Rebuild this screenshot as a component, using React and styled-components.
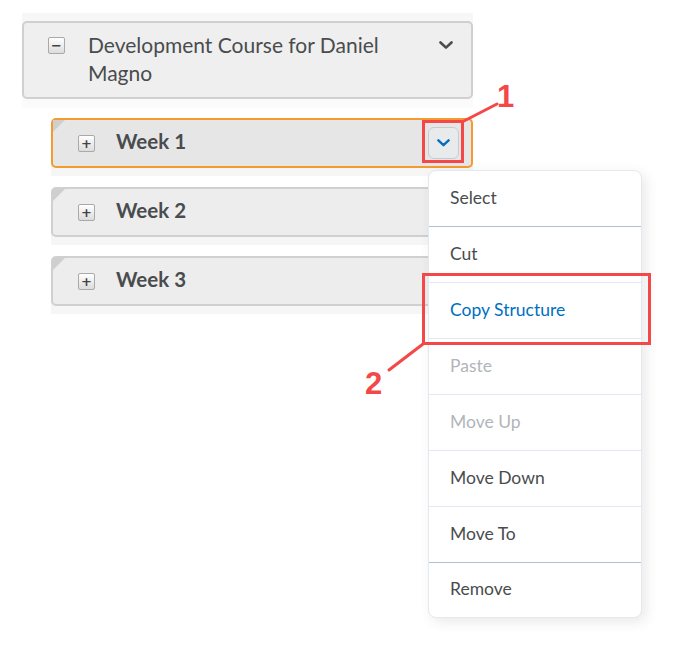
import React from 'react';
import styled, { createGlobalStyle } from 'styled-components';

const GlobalStyle = createGlobalStyle`
  html, body {
    margin: 0;
    padding: 0;
    background: #fff;
  }
  body {
    font-family: Lato, "Open Sans", sans-serif;
    color: #494c4e;
  }
`;

const menuItems = [
  { label: 'Select', line: 'strong' },
  { label: 'Cut' },
  { label: 'Copy Structure', tone: 'active' },
  { label: 'Paste', tone: 'disabled' },
  { label: 'Move Up', tone: 'disabled' },
  { label: 'Move Down' },
  { label: 'Move To', line: 'strong' },
  { label: 'Remove', line: 'none' },
];

const weeks = ['Week 1', 'Week 2', 'Week 3'];

const Chevron = ({ color = '#494c4e', width = 14 }) => (
  <svg width={width} height={width * 0.6} viewBox="0 0 14 8.4" fill="none">
    <path
      d="M1.5 1.5 L7 6.6 L12.5 1.5"
      stroke={color}
      strokeWidth="2.6"
      strokeLinecap="round"
      strokeLinejoin="round"
    />
  </svg>
);

const App = () => {
  return (
    <>
      <GlobalStyle />
      <Page>
        <Tree>
          <CourseBand>
            <CoursePanel>
              <ToggleBox>−</ToggleBox>
              <CourseTitle>Development Course for Daniel Magno</CourseTitle>
              <CourseChevron>
                <Chevron />
              </CourseChevron>
            </CoursePanel>
          </CourseBand>
          <Children>
            {weeks.map((w, i) => (
              <WeekSlot key={w}>
                <WeekRow selected={i === 0}>
                  <ToggleBox small>+</ToggleBox>
                  <WeekTitle>{w}</WeekTitle>
                  {i === 0 && (
                    <MenuButton>
                      <Chevron color="#006fbf" width={13} />
                    </MenuButton>
                  )}
                </WeekRow>
              </WeekSlot>
            ))}
          </Children>
        </Tree>

        <Menu>
          {menuItems.map((m) => (
            <MenuItem key={m.label} tone={m.tone} line={m.line}>
              {m.label}
            </MenuItem>
          ))}
        </Menu>

        <Callouts width="691" height="659" viewBox="0 0 691 659">
          <rect x="423.5" y="121.5" width="39" height="40" fill="none" stroke="#f44848" strokeWidth="3" />
          <line x1="462" y1="122" x2="497" y2="104" stroke="#f44848" strokeWidth="3" strokeLinecap="round" />
          <rect x="423.5" y="274.5" width="226" height="69" fill="none" stroke="#f44848" strokeWidth="3" />
          <line x1="423" y1="344" x2="389" y2="370" stroke="#f44848" strokeWidth="3" strokeLinecap="round" />
        </Callouts>
        <CalloutNumber style={{ left: 497, top: 81 }}>1</CalloutNumber>
        <CalloutNumber style={{ left: 365, top: 368 }}>2</CalloutNumber>
      </Page>
    </>
  );
};

export default App;

const Page = styled.div`
  position: relative;
  width: 691px;
  height: 659px;
  padding: 13px 0 0 22px;
  box-sizing: border-box;
`;

const Tree = styled.div`
  width: 451px;
`;

const CourseBand = styled.div`
  padding: 8px 0 9px;
  background: linear-gradient(#f7f7f7, #fbfbfb);
`;

const CoursePanel = styled.div`
  display: flex;
  align-items: flex-start;
  height: 78px;
  box-sizing: border-box;
  padding: 8px 18px 9px 24px;
  background: #efefef;
  border: 2px solid #d0d0d0;
  border-radius: 5px;
`;

const ToggleBox = styled.div`
  flex: none;
  width: 15px;
  height: 15px;
  margin-top: ${({ small }) => (small ? '0' : '6px')};
  margin-right: ${({ small }) => (small ? '23px' : '23px')};
  border: 1px solid #a9a9a9;
  border-radius: 2px;
  background: linear-gradient(#ffffff, #dcdcdc);
  display: flex;
  align-items: center;
  justify-content: center;
  font: bold 13px/1 "DejaVu Sans", sans-serif;
  color: #444;
`;

const CourseTitle = styled.div`
  flex: 1;
  font-size: 21px;
  line-height: 28px;
  color: #494c4e;
  padding-right: 20px;
`;

const CourseChevron = styled.div`
  flex: none;
  padding-top: 10px;
  display: flex;
`;

const Children = styled.div`
  margin-left: 29px;
  padding-top: 10px;
  padding-bottom: 8px;
  display: flex;
  flex-direction: column;
  gap: 11px;
`;

const WeekSlot = styled.div`
  padding-bottom: 8px;
  background: linear-gradient(#ffffff 50%, #f6f6f6 50%);
`;

const WeekRow = styled.div`
  position: relative;
  display: flex;
  align-items: center;
  height: 50px;
  box-sizing: border-box;
  padding: 0 12px 0 25px;
  background: ${({ selected }) => (selected ? '#e6e6e6' : '#ededed')};
  border: 2px solid ${({ selected }) => (selected ? '#f39b2f' : '#d0d0d0')};
  border-radius: 5px;

  &::before {
    content: '';
    position: absolute;
    top: 0;
    left: 0;
    border-style: solid;
    border-width: 12px 12px 0 0;
    border-color: #cfcfcf transparent transparent transparent;
  }
`;

const WeekTitle = styled.div`
  flex: 1;
  font-size: 20.5px;
  font-weight: 700;
  color: #494c4e;
  margin-top: -4px;
  margin-left: -2px;
`;

const MenuButton = styled.div`
  flex: none;
  width: 31px;
  height: 32px;
  box-sizing: border-box;
  border: 1px solid #c6cbd3;
  border-radius: 6px;
  background: #e9eaec;
  display: flex;
  align-items: center;
  justify-content: center;
`;

const Menu = styled.div`
  position: absolute;
  left: 428px;
  top: 170px;
  width: 214px;
  background: #fff;
  border: 1px solid #e4e8ef;
  border-radius: 8px;
  box-shadow: 4px 4px 14px rgba(0, 0, 0, 0.09);
  overflow: hidden;
  box-sizing: border-box;
`;

const MenuItem = styled.div`
  height: ${({ line }) => (line === 'none' ? '54px' : '56px')};
  box-sizing: border-box;
  display: flex;
  align-items: center;
  padding-left: 21px;
  padding-bottom: 2px;
  font-size: 17.5px;
  color: ${({ tone }) =>
    tone === 'active' ? '#006fbf' : tone === 'disabled' ? '#b1b5ba' : '#494c4e'};
  border-bottom: 1px solid
    ${({ line }) =>
      line === 'strong' ? '#b5bfcd' : line === 'none' ? 'transparent' : '#e3e8f0'};
`;

const Callouts = styled.svg`
  position: absolute;
  left: 0;
  top: 0;
  pointer-events: none;
`;

const CalloutNumber = styled.span`
  position: absolute;
  font-family: "Liberation Sans", Arial, sans-serif;
  font-weight: 700;
  font-size: 31px;
  line-height: 1;
  color: #f44848;
`;
